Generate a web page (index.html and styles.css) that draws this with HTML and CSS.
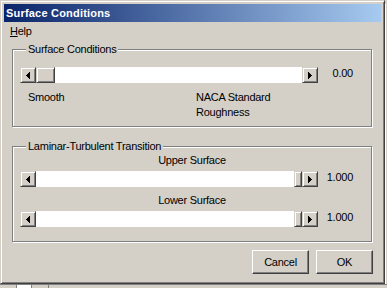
FILE: index.html
```html
<!DOCTYPE html>
<html lang="en">
<head>
  <meta charset="UTF-8" />
  <title>Surface Conditions</title>
  <link rel="stylesheet" href="styles.css">
</head>
<body>
  <div class="screen">
    <div class="screen-top">
      <!-- Dialog window -->
      <div class="window">
        <div class="titlebar">Surface Conditions</div>
        <div class="menubar"><span class="menu-item"><u>H</u>elp</span></div>

        <div class="dialog">
          <fieldset class="group group-surface">
            <legend>Surface Conditions</legend>
            <div class="slider-row">
              <div class="scrollbar">
                <div class="arrow-btn arrow-left">
                  <svg width="4" height="7" viewBox="0 0 4 7"><path d="M0 3h1v1H0zM1 2h1v3H1zM2 1h1v5H2zM3 0h1v7H3z" fill="#000"/></svg>
                </div>
                <div class="thumb thumb-wide"></div>
                <div class="track"></div>
                <div class="arrow-btn">
                  <svg width="4" height="7" viewBox="0 0 4 7"><path d="M0 0h1v7H0zM1 1h1v5H1zM2 2h1v3H2zM3 3h1v1H3z" fill="#000"/></svg>
                </div>
              </div>
              <span class="value">0.00</span>
            </div>
            <div class="scale-labels">
              <span class="scale-min">Smooth</span>
              <span class="scale-max">NACA Standard<br>Roughness</span>
            </div>
          </fieldset>

          <fieldset class="group group-transition">
            <legend>Laminar-Turbulent Transition</legend>
            <div class="caption">Upper Surface</div>
            <div class="slider-row">
              <div class="scrollbar">
                <div class="arrow-btn arrow-left">
                  <svg width="4" height="7" viewBox="0 0 4 7"><path d="M0 3h1v1H0zM1 2h1v3H1zM2 1h1v5H2zM3 0h1v7H3z" fill="#000"/></svg>
                </div>
                <div class="track"></div>
                <div class="thumb thumb-narrow"></div>
                <div class="arrow-btn">
                  <svg width="4" height="7" viewBox="0 0 4 7"><path d="M0 0h1v7H0zM1 1h1v5H1zM2 2h1v3H2zM3 3h1v1H3z" fill="#000"/></svg>
                </div>
              </div>
              <span class="value">1.000</span>
            </div>
            <div class="caption caption-lower">Lower Surface</div>
            <div class="slider-row">
              <div class="scrollbar">
                <div class="arrow-btn arrow-left">
                  <svg width="4" height="7" viewBox="0 0 4 7"><path d="M0 3h1v1H0zM1 2h1v3H1zM2 1h1v5H2zM3 0h1v7H3z" fill="#000"/></svg>
                </div>
                <div class="track"></div>
                <div class="thumb thumb-narrow"></div>
                <div class="arrow-btn">
                  <svg width="4" height="7" viewBox="0 0 4 7"><path d="M0 0h1v7H0zM1 1h1v5H1zM2 2h1v3H2zM3 3h1v1H3z" fill="#000"/></svg>
                </div>
              </div>
              <span class="value">1.000</span>
            </div>
          </fieldset>

          <div class="buttons">
            <button class="button">Cancel</button>
            <button class="button">OK</button>
          </div>
        </div>
      </div>
      <div class="edge"></div>
    </div>

    <!-- Bit of the window behind -->
    <div class="strip">
      <span class="strip-cell"></span>
      <span class="strip-cell strip-cell-light"></span>
      <span class="strip-cell"></span>
    </div>
  </div>
</body>
</html>
```

FILE: styles.css
```css
body {
  margin: 0;
  width: 387px;
  height: 288px;
  overflow: hidden;
  background-color: #d4d0c8;
  font-family: "Liberation Sans", Arial, sans-serif;
  font-size: 11px;
  letter-spacing: -0.25px;
  color: #000;
}

.screen {
  display: flex;
  flex-direction: column;
}

.screen-top {
  display: flex;
}

.window {
  box-sizing: border-box;
  width: 385px;
  height: 284px;
  padding: 3px;
  border: 1px solid;
  border-color: #d4d0c8 #404040 #404040 #d4d0c8;
  box-shadow: inset 1px 1px 0 #fff, inset -1px -1px 0 #808080;
  display: flex;
  flex-direction: column;
}

.edge {
  width: 1px;
  margin-top: 4px;
  border-left: 1px solid #fff;
}

.titlebar {
  box-sizing: border-box;
  height: 18px;
  padding: 1px 0 0 2px;
  line-height: 17px;
  font-weight: bold;
  letter-spacing: 0.2px;
  color: #fff;
  background: linear-gradient(to right, #0a246a, #a6caf0);
}

.menubar {
  height: 19px;
  line-height: 19px;
  padding-left: 6px;
}

.dialog {
  flex: 1;
  display: flex;
  flex-direction: column;
  padding: 2px 9px 0 8px;
}

.group {
  margin: 0;
  border: 1px solid #808080;
  box-shadow: inset 1px 1px 0 #fff, 1px 1px 0 #fff;
  min-width: 0;
}

.group legend {
  margin-left: 6px;
  padding: 0 2px;
  line-height: 13px;
  background-color: #d4d0c8;
}

.group-surface {
  padding: 11px 7px 6px 7px;
}

.group-transition {
  margin-top: 13px;
  padding: 1px 7px 14px 7px;
}

.slider-row {
  display: flex;
  align-items: flex-start;
}

.scrollbar {
  display: flex;
  width: 298px;
  height: 16px;
}

.arrow-btn,
.thumb {
  box-sizing: border-box;
  height: 16px;
  border: 1px solid;
  border-color: #d4d0c8 #404040 #404040 #d4d0c8;
  box-shadow: inset 1px 1px 0 #fff, inset -1px -1px 0 #808080;
  background-color: #d4d0c8;
}

.arrow-btn {
  width: 16px;
  display: flex;
  align-items: center;
  justify-content: center;
}

.arrow-left svg {
  margin-right: 1px;
}

.thumb-wide { width: 19px; }
.thumb-narrow { width: 8px; }

.track {
  flex: 1;
  background-color: #fff;
}

.value {
  width: 35px;
  text-align: right;
  line-height: 13px;
}

.scale-labels {
  display: flex;
  margin-top: 7px;
  line-height: 15px;
}

.scale-min {
  width: 168px;
  margin-left: 8px;
}

.caption {
  text-align: center;
  line-height: 13px;
  margin-bottom: 4px;
}

.caption-lower {
  margin-top: 7px;
}

.buttons {
  display: flex;
  justify-content: flex-end;
  gap: 7px;
  margin: 8px -1px 0 0;
}

.button {
  width: 57px;
  height: 24px;
  padding: 0;
  border: 1px solid;
  border-color: #fff #404040 #404040 #fff;
  box-shadow: inset -1px -1px 0 #808080;
  background-color: #d4d0c8;
  font: inherit;
  letter-spacing: inherit;
  color: #000;
}

.strip {
  display: flex;
  height: 4px;
  border-top: 1px solid #808080;
}

.strip-cell {
  width: 16px;
  border-right: 1px solid #808080;
}

.strip-cell-light {
  width: 14px;
  background-color: #fff;
}
```
